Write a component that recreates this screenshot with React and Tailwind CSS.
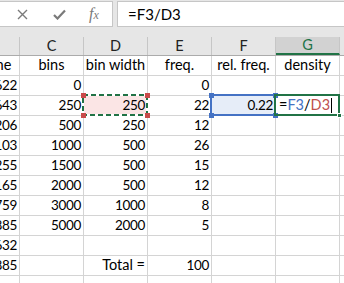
import React from "react";

const colHeaders = ["B", "C", "D", "E", "F", "G", "H"];

// col B is mostly scrolled off to the left, only its tail shows
const rows = [
  ["lifetime", "bins", "bin width", "freq.", "rel. freq.", "density"],
  ["0.622", "0", "", "0", "", ""],
  ["0.643", "250", "250", "22", "0.22", "=F3/D3"],
  ["0.206", "500", "250", "12", "", ""],
  ["0.103", "1000", "500", "26", "", ""],
  ["0.255", "1500", "500", "15", "", ""],
  ["0.165", "2000", "500", "12", "", ""],
  ["0.759", "3000", "1000", "8", "", ""],
  ["0.885", "5000", "2000", "5", "", ""],
  ["0.632", "", "", "", "", ""],
  ["0.885", "", "Total =", "100", "", ""],
  ["", "", "", "", "", ""],
];

const Corner = ({ pos, color }) => (
  <span className={`absolute w-[5px] h-[5px] ${color} ${pos}`} />
);

const Num = ({ children }) => (
  <span className="text-[13.5px] tracking-[-0.3px]">{children}</span>
);

const Cell = ({ value, rowIdx, colIdx }) => {
  const isHeaderRow = rowIdx === 0;
  const isNumber = !isHeaderRow && value !== "" && !isNaN(Number(value));

  // D3 - referenced (red corners) + copy marquee
  if (rowIdx === 2 && colIdx === 2) {
    return (
      <div className="relative w-[64px] h-[20px] border-r border-b border-[#d4d4d4] bg-[#fbe5e5] flex items-center justify-end pr-[2px]">
        <Num>{value}</Num>
        <svg className="absolute -left-[2px] -top-[2px]" width="66" height="22" viewBox="0 0 66 22">
          <rect x="1" y="1" width="64" height="20" fill="none" stroke="#ffffff" strokeWidth="2" />
          <rect x="1" y="1" width="64" height="20" fill="none" stroke="#217346" strokeWidth="2" strokeDasharray="5 3" />
        </svg>
        <Corner pos="-left-[3px] -top-[3px]" color="bg-[#c94a4a]" />
        <Corner pos="-right-[3px] -top-[3px]" color="bg-[#c94a4a]" />
        <Corner pos="-left-[3px] -bottom-[3px]" color="bg-[#c94a4a]" />
        <Corner pos="-right-[3px] -bottom-[3px]" color="bg-[#c94a4a]" />
      </div>
    );
  }

  // F3 - referenced (blue)
  if (rowIdx === 2 && colIdx === 4) {
    return (
      <div className="relative w-[64px] h-[20px] border-r border-b border-[#d4d4d4] bg-[#e6edf8] flex items-center justify-end pr-[2px]">
        <Num>{value}</Num>
        <div className="absolute -left-[2px] -top-[2px] w-[66px] h-[22px] border-2 border-[#4472c4]" />
        <Corner pos="-left-[3px] -top-[3px]" color="bg-[#4472c4]" />
        <Corner pos="-right-[3px] -top-[3px]" color="bg-[#4472c4]" />
        <Corner pos="-left-[3px] -bottom-[3px]" color="bg-[#4472c4]" />
        <Corner pos="-right-[3px] -bottom-[3px]" color="bg-[#4472c4]" />
      </div>
    );
  }

  // G3 - active cell being edited
  if (rowIdx === 2 && colIdx === 5) {
    return (
      <div className="relative w-[64px] h-[20px] border-r border-b border-[#d4d4d4] flex items-center pl-[3px]">
        <span>=</span>
        <span className="text-[#4472c4]">F3</span>
        <span>/</span>
        <span className="text-[#c0504d]">D3</span>
        <span className="ml-px w-px h-[15px] bg-black" />
        <div className="absolute -left-[2px] -top-[2px] w-[66px] h-[22px] border-2 border-[#217346]" />
        <span className="absolute -right-[3px] -bottom-[3px] w-[5px] h-[5px] bg-[#217346] border border-white" />
      </div>
    );
  }

  return (
    <div
      className={`w-[64px] h-[20px] border-r border-b border-[#d4d4d4] flex items-center ${
        isHeaderRow ? "justify-center" : "justify-end pr-[2px]"
      } whitespace-nowrap`}
    >
      {isNumber ? <Num>{value}</Num> : value}
    </div>
  );
};

const App = () => {
  return (
    <div className="w-[344px] h-[283px] overflow-hidden bg-white font-['Lato','Liberation_Sans',sans-serif] text-[14.5px] text-black leading-none">
      {/* Formula bar */}
      <div className="h-[37px] bg-[#e6e6e6] pt-px">
        <div className="flex gap-[4px] h-[26px]">
          <div className="w-[113px] h-full bg-white border-y border-r border-[#c6c6c6] flex items-center text-[#7a7a7a]">
            <svg className="ml-[17px]" width="11" height="11" viewBox="0 0 11 11">
              <path d="M1 1 L10 10 M10 1 L1 10" stroke="#7a7a7a" strokeWidth="1.4" fill="none" />
            </svg>
            <svg className="ml-[25px]" width="13" height="11" viewBox="0 0 13 11">
              <path d="M1 6 L4.5 9.5 L12 1.5" stroke="#7a7a7a" strokeWidth="2.2" fill="none" />
            </svg>
            <span className="ml-[23px] font-['Liberation_Serif',serif] italic text-[16px]">
              f<span className="text-[12px]">x</span>
            </span>
          </div>
          <div className="flex-1 h-full bg-white border-y border-l border-[#c6c6c6] flex items-center pl-[10px] text-[15px]">
            =F3/D3
          </div>
        </div>
      </div>

      {/* Column headers */}
      <div className="flex ml-[-44px] h-[19px] bg-[#e6e6e6] border-b border-[#ababab]">
        {colHeaders.map((h) => (
          <div
            key={h}
            className={`w-[64px] shrink-0 h-full flex items-center justify-center border-r border-[#c6c6c6] ${
              h === "G"
                ? "bg-[#d2d2d2] text-[#217346] border-b-2 border-b-[#217346]"
                : "text-[#222]"
            }`}
          >
            {h}
          </div>
        ))}
      </div>

      {/* Grid */}
      <div className="ml-[-44px]">
        {rows.map((row, r) => (
          <div key={r} className="flex">
            {row.map((v, c) => (
              <div key={c} className="shrink-0">
                <Cell value={v} rowIdx={r} colIdx={c} />
              </div>
            ))}
            <div className="shrink-0 w-[64px] h-[20px] border-r border-b border-[#d4d4d4]" />
          </div>
        ))}
      </div>
    </div>
  );
};

export default App;
